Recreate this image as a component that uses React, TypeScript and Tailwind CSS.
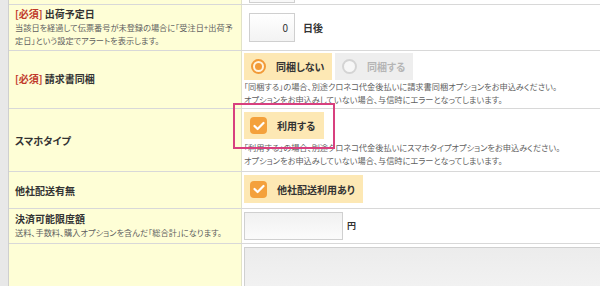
function Radio({ on }: { on: boolean }) {
  return on ? (
    <span className="flex h-[15px] w-[15px] items-center justify-center rounded-full border-2 border-[#f29a38] bg-[#fff3dc]">
      <span className="h-[7px] w-[7px] rounded-full bg-[#f29a38]" />
    </span>
  ) : (
    <span className="flex h-[15px] w-[15px] items-center justify-center rounded-full border-2 border-[#d4d4d4] bg-[#f7f7f7]" />
  );
}

function Check() {
  return (
    <span className="flex h-[17px] w-[17px] items-center justify-center rounded-[4px] bg-[#f4a13c]">
      <svg width="12" height="10" viewBox="0 0 12 10" fill="none">
        <path d="M1.5 5 L4.6 8 L10.5 2" stroke="white" strokeWidth="2.2" strokeLinecap="round" strokeLinejoin="round" />
      </svg>
    </span>
  );
}

function Required() {
  return <span className="text-[#c0392b]">[必須]</span>;
}

function Note({ children }: { children: React.ReactNode }) {
  return <p className="whitespace-nowrap text-[8.2px] leading-[13px] text-[#5f5f5f]">{children}</p>;
}

export default function App() {
  return (
    <div className="flex h-[286px] w-[600px] overflow-hidden bg-white font-['Noto_Sans_CJK_JP','Noto_Sans',sans-serif] text-[#333] [font-feature-settings:'palt']">
      {/* left frame */}
      <div className="w-[9px] shrink-0 border-r border-[#cfcfcf] bg-[#e8e8e8]" />

      <div className="flex-1">
        {/* tail of previous row */}
        <div className="grid h-[5px] grid-cols-[233px_1fr] border-b border-[#d8d8d8]">
          <div className="border-r border-[#e2e2c8] bg-[#fefed6]" />
          <div className="px-[7px]">
            <div className="h-[3px] w-[46px] border-x border-b border-[#d0d0d0] bg-[#f8f8f8]" />
          </div>
        </div>

        {/* 出荷予定日 */}
        <div className="grid h-[46px] grid-cols-[233px_1fr] border-b border-[#d8d8d8]">
          <div className="border-r border-[#e2e2c8] bg-[#fefed6] pl-[6px] pt-[2px]">
            <p className="text-[10px] font-bold leading-[14px]">
              <Required /> 出荷予定日
            </p>
            <Note>
              当該日を経過して伝票番号が未登録の場合に「受注日+出荷予
              <br />
              定日」という設定でアラートを表示します。
            </Note>
          </div>
          <div className="flex items-center gap-[8px] pl-[7px]">
            <div className="flex h-[29px] w-[46px] items-center justify-end border border-[#cfcfcf] bg-gradient-to-b from-[#ffffff] to-[#f3f3f3] pr-[6px] text-[10px]">
              0
            </div>
            <span className="text-[10px] font-bold">日後</span>
          </div>
        </div>

        {/* 請求書同梱 */}
        <div className="grid h-[58px] grid-cols-[233px_1fr] border-b border-[#d8d8d8]">
          <div className="flex items-center border-r border-[#e2e2c8] bg-[#fefed6] pl-[6px] pb-[2px]">
            <p className="text-[10px] font-bold">
              <Required /> 請求書同梱
            </p>
          </div>
          <div className="pl-[2px] pt-[2px]">
            <div className="flex gap-[3px]">
              <div className="flex h-[27px] w-[88px] items-center gap-[10px] bg-[#fde8b4] pl-[7px] text-[10px] font-bold">
                <Radio on />
                同梱しない
              </div>
              <div className="flex h-[27px] w-[78px] items-center gap-[10px] bg-[#eeeeee] pl-[7px] text-[10px] font-bold text-[#b5b5b5]">
                <Radio on={false} />
                同梱する
              </div>
            </div>
            <Note>
              「同梱する」の場合、別途クロネコ代金後払いに請求書同梱オプションをお申込みください。
              <br />
              オプションをお申込みしていない場合、与信時にエラーとなってしまいます。
            </Note>
          </div>
        </div>

        {/* スマホタイプ */}
        <div className="grid h-[63px] grid-cols-[233px_1fr] border-b border-[#d8d8d8]">
          <div className="flex items-center border-r border-[#e2e2c8] bg-[#fefed6] pl-[6px]">
            <p className="text-[10px] font-bold">スマホタイプ</p>
          </div>
          <div className="relative pl-[2px] pt-[3px]">
            <div className="absolute left-[-9px] top-[-6px] h-[46px] w-[102px] border-[2.5px] border-[#d8407f]" />
            <div className="flex h-[27px] w-[80px] items-center gap-[10px] bg-[#fde8b4] pl-[6px] text-[10px] font-bold">
              <Check />
              利用する
            </div>
            <div className="mt-[2px]">
              <Note>
                「利用する」の場合、別途クロネコ代金後払いにスマホタイプオプションをお申込みください。
                <br />
                オプションをお申込みしていない場合、与信時にエラーとなってしまいます。
              </Note>
            </div>
          </div>
        </div>

        {/* 他社配送有無 */}
        <div className="grid h-[37px] grid-cols-[233px_1fr] border-b border-[#d8d8d8]">
          <div className="flex items-center border-r border-[#e2e2c8] bg-[#fefed6] pl-[6px]">
            <p className="text-[10px] font-bold">他社配送有無</p>
          </div>
          <div className="pl-[2px] pt-[3px]">
            <div className="flex h-[28px] w-[119px] items-center gap-[10px] bg-[#fde8b4] pl-[6px] text-[10px] font-bold">
              <Check />
              他社配送利用あり
            </div>
          </div>
        </div>

        {/* 決済可能限度額 */}
        <div className="grid h-[35px] grid-cols-[233px_1fr] border-b border-[#d8d8d8]">
          <div className="border-r border-[#e2e2c8] bg-[#fefed6] pl-[6px] pt-[3px]">
            <p className="text-[10px] font-bold leading-[14px]">決済可能限度額</p>
            <Note>送料、手数料、購入オプションを含んだ「総合計」になります。</Note>
          </div>
          <div className="flex items-center gap-[4px] pl-[2px]">
            <div className="h-[28px] w-[99px] border border-[#d0d0d0] bg-gradient-to-b from-[#f1f1f1] to-[#fbfbfb]" />
            <span className="text-[9px] font-bold">円</span>
          </div>
        </div>

        {/* textarea row */}
        <div className="grid h-[60px] grid-cols-[233px_1fr]">
          <div className="border-r border-[#e2e2c8] bg-[#fefed6]" />
          <div className="pl-[2px] pt-[3px]">
            <div className="h-full border-l border-t border-[#d0d0d0] bg-gradient-to-b from-[#ececec] to-[#f4f4f4]" />
          </div>
        </div>
      </div>
    </div>
  );
}
